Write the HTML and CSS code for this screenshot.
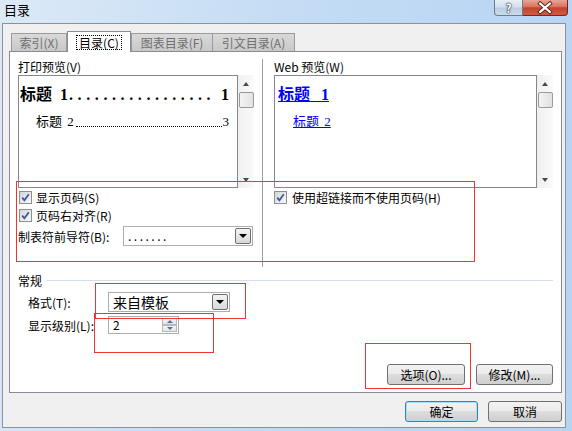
FILE: index.html
```html
<!DOCTYPE html>
<html lang="zh-CN">
  <head>
    <meta charset="UTF-8" />
    <title>目录</title>
    <link rel="stylesheet" href="styles.css">
  </head>
  <body>
    <div class="window">
      <div class="titlebar">
        <span class="title">目录</span>
        <div class="caption-btns">
          <span class="cap-help">?</span>
          <span class="cap-close">
            <svg width="45" height="16" viewBox="0 0 45 16">
              <path d="M17.5 3.5 L27.5 12 M27.5 3.5 L17.5 12" stroke="#5a1a10" stroke-width="4" stroke-linecap="square" />
              <path d="M17.5 3.5 L27.5 12 M27.5 3.5 L17.5 12" stroke="#fff" stroke-width="2.2" stroke-linecap="square" />
            </svg>
          </span>
        </div>
      </div>

      <div class="client">
        <div class="tabs">
          <span class="tab tab-index">索引(X)</span>
          <span class="tab tab-active"><span class="focus">目录(C)</span></span>
          <span class="tab tab-figures">图表目录(F)</span>
          <span class="tab tab-cite">引文目录(A)</span>
        </div>

        <div class="panel">
          <div class="previews">
            <div class="col col-left">
              <div class="label">打印预览(V)</div>
              <div class="preview">
                <div class="preview-box">
                  <div class="toc-1">
                    <span>标题 1</span>
                    <span class="leader-big">.................</span>
                    <span>1</span>
                  </div>
                  <div class="toc-2">
                    <span>标题 2</span>
                    <span class="leader-small"></span>
                    <span>3</span>
                  </div>
                </div>
                <div class="vscroll">
                  <span class="arrow arrow-up"></span>
                  <span class="thumb"></span>
                  <span class="track"></span>
                  <span class="arrow arrow-down"></span>
                </div>
              </div>
              <div class="check-row">
                <span class="check"><svg width="9" height="9" viewBox="0 0 9 9"><path d="M1.2 4.6 L3.4 7.2 L7.8 1.2" fill="none" stroke="#3f5a98" stroke-width="1.8" /></svg></span>
                <span>显示页码(S)</span>
              </div>
              <div class="check-row">
                <span class="check"><svg width="9" height="9" viewBox="0 0 9 9"><path d="M1.2 4.6 L3.4 7.2 L7.8 1.2" fill="none" stroke="#3f5a98" stroke-width="1.8" /></svg></span>
                <span>页码右对齐(R)</span>
              </div>
              <div class="field-row">
                <span class="field-label">制表符前导符(B):</span>
                <div class="combo combo-leader">
                  <span class="combo-text dots">.......</span>
                  <span class="combo-btn"></span>
                </div>
              </div>
            </div>

            <div class="divider"></div>

            <div class="col col-right">
              <div class="label">Web 预览(W)</div>
              <div class="preview">
                <div class="preview-box">
                  <div class="web-1">标题 1</div>
                  <div class="web-2">标题 2</div>
                </div>
                <div class="vscroll">
                  <span class="arrow arrow-up"></span>
                  <span class="thumb"></span>
                  <span class="track"></span>
                  <span class="arrow arrow-down"></span>
                </div>
              </div>
              <div class="check-row">
                <span class="check"><svg width="9" height="9" viewBox="0 0 9 9"><path d="M1.2 4.6 L3.4 7.2 L7.8 1.2" fill="none" stroke="#3f5a98" stroke-width="1.8" /></svg></span>
                <span>使用超链接而不使用页码(H)</span>
              </div>
            </div>
          </div>

          <div class="group-head">
            <span>常规</span>
            <span class="group-line"></span>
          </div>
          <div class="form-row">
            <span class="form-label">格式(T):</span>
            <div class="combo combo-format">
              <span class="combo-text">来自模板</span>
              <span class="combo-btn"></span>
            </div>
          </div>
          <div class="form-row form-row-spin">
            <span class="form-label">显示级别(L):</span>
            <div class="spin">
              <span class="spin-text">2</span>
              <span class="spin-btns">
                <span class="spin-up"></span>
                <span class="spin-down"></span>
              </span>
            </div>
          </div>

          <div class="panel-actions">
            <button class="btn btn-options">选项(O)...</button>
            <button class="btn btn-modify">修改(M)...</button>
          </div>
        </div>

        <div class="dialog-actions">
          <button class="btn btn-ok">确定</button>
          <button class="btn btn-cancel">取消</button>
        </div>
      </div>
    </div>

    <!-- red annotation boxes drawn over the dialog -->
    <div class="mark mark-checks"></div>
    <div class="mark mark-format"></div>
    <div class="mark mark-level"></div>
    <div class="mark mark-options"></div>
  </body>
</html>
```

FILE: styles.css
```css
* {
  margin: 0;
  padding: 0;
  box-sizing: border-box;
}
body {
  position: relative;
  width: 572px;
  height: 431px;
  overflow: hidden;
  font-family: "Noto Sans CJK SC", "Liberation Sans", sans-serif;
  font-size: 12px;
  color: #000;
  background: linear-gradient(100deg, #dce9f7 0%, #c4dcf4 45%, #b6d3f3 100%);
}
.window {
  display: flex;
  flex-direction: column;
  height: 431px;
}
.titlebar {
  height: 23px;
  display: flex;
  align-items: flex-start;
}
.title {
  padding: 3px 0 0 4px;
  line-height: 14px;
  font-size: 13px;
}
.caption-btns {
  margin-left: auto;
  margin-right: 4px;
  display: flex;
}
.cap-help {
  width: 29px;
  height: 16px;
  border: 1px solid #6f7c8e;
  border-top: none;
  border-radius: 0 0 0 4px;
  background: linear-gradient(#e8eff8 0%, #d3dfec 48%, #bccbdf 52%, #cbdbee 100%);
  color: #fff;
  font-weight: bold;
  font-size: 12px;
  line-height: 15px;
  text-align: center;
  text-shadow: 0 0 1px #2d3a4c, 0 0 1px #2d3a4c, 0 0 2px #2d3a4c;
}
.cap-close {
  width: 45px;
  height: 16px;
  border: 1px solid #6b2a22;
  border-left: none;
  border-top: none;
  border-radius: 0 0 4px 0;
  background: linear-gradient(#e8a597 0%, #d9735f 45%, #c4422b 52%, #d35a3f 100%);
  display: flex;
}
.client {
  flex: 1;
  margin: 0 6px 3px 2px;
  border: 1px solid #8b929c;
  background: #f0f0f0;
  padding: 7px 0 0 6px;
  display: flex;
  flex-direction: column;
}

/* tabs */
.tabs {
  display: flex;
  align-items: flex-end;
  height: 20px;
  margin-left: 2px;
}
.tab {
  height: 18px;
  border: 1px solid #9b9b9b;
  border-bottom: none;
  background: linear-gradient(#d9d9d9, #c8c8c8);
  color: #6f6f6f;
  display: flex;
  align-items: center;
  justify-content: center;
  line-height: 14px;
}
.tab-index {
  width: 56px;
}
.tab-active {
  position: relative;
  z-index: 1;
  width: 64px;
  height: 21px;
  margin-bottom: -1px;
  border-color: #898c95;
  background: #fff;
  color: #000;
  align-items: flex-start;
  padding-top: 3px;
}
.focus {
  border: 1px dotted #000;
  padding: 0 2px;
  line-height: 13px;
}
.tab-figures {
  width: 82px;
}
.tab-cite {
  width: 82px;
  border-left: none;
}

/* panel */
.panel {
  width: 553px;
  height: 342px;
  border: 1px solid #898c95;
  background: #fff;
  padding: 7px 8px 7px 8px;
  display: flex;
  flex-direction: column;
}
.previews {
  display: flex;
  height: 208px;
}
.col-left {
  width: 236px;
}
.col-right {
  width: 279px;
}
.divider {
  width: 1px;
  background: #a0a0a0;
  margin: 0 11px 0 8px;
}
.label {
  height: 16px;
  line-height: 16px;
}
.preview {
  display: flex;
  height: 113px;
}
.preview-box {
  flex: 1;
  min-width: 0;
  overflow: hidden;
  border: 1px solid #828790;
  background: #fff;
  padding: 9px 8px 0 1px;
}
.toc-1 {
  display: flex;
  align-items: baseline;
  height: 20px;
  line-height: 20px;
  font-family: "Liberation Serif", "Noto Sans CJK SC", serif;
  font-size: 16px;
  font-weight: bold;
  word-spacing: 4px;
}
.toc-1 span,
.toc-2 span {
  flex: none;
}
.toc-1 .leader-big {
  flex: 1;
  min-width: 0;
  overflow: hidden;
  white-space: nowrap;
  letter-spacing: 4.6px;
  margin-left: 1px;
}
.toc-2 {
  display: flex;
  align-items: baseline;
  height: 20px;
  line-height: 20px;
  margin-top: 7px;
  padding-left: 16px;
  font-family: "Liberation Serif", "Noto Sans CJK SC", serif;
  font-size: 13px;
  word-spacing: 2px;
}
.toc-2 .leader-small {
  flex: 1;
  align-self: flex-end;
  height: 1px;
  margin: 0 1px 5px 2px;
  border-bottom: 1px dotted #000;
}
.web-1 {
  height: 20px;
  line-height: 20px;
  padding-left: 2px;
  color: #0000ff;
  text-decoration: underline;
  font-family: "Liberation Serif", "Noto Sans CJK SC", serif;
  font-size: 16px;
  font-weight: bold;
  word-spacing: 7px;
}
.web-2 {
  height: 20px;
  line-height: 20px;
  margin-top: 7px;
  padding-left: 17px;
  color: #0000ff;
  text-decoration: underline;
  font-family: "Liberation Serif", "Noto Sans CJK SC", serif;
  font-size: 13px;
  word-spacing: 2px;
}
.vscroll {
  width: 16px;
  flex: none;
  display: flex;
  flex-direction: column;
  align-items: center;
  background: linear-gradient(to right, #efefef, #fbfbfb);
}
.arrow {
  height: 17px;
  width: 16px;
  display: flex;
  align-items: center;
  justify-content: center;
}
.arrow::after {
  content: "";
  border-left: 3.5px solid transparent;
  border-right: 3.5px solid transparent;
}
.arrow-up::after {
  border-bottom: 4px solid #4a4a4a;
}
.arrow-down::after {
  border-top: 4px solid #4a4a4a;
}
.thumb {
  width: 15px;
  height: 16px;
  border: 1px solid #9a9a9a;
  border-radius: 2px;
  background: linear-gradient(to right, #f3f3f3, #e2e2e2);
}
.track {
  flex: 1;
}

/* checkboxes and combos */
.check-row {
  display: flex;
  align-items: center;
  height: 18px;
  gap: 4px;
}
.col-left .check {
  margin-left: 1px;
}
.col-right .check-row {
  gap: 5px;
}
.check {
  width: 13px;
  height: 13px;
  border: 1px solid #8e8f8f;
  background: linear-gradient(135deg, #d2d5da, #f8f9fa);
  display: flex;
  align-items: center;
  justify-content: center;
}
.field-row {
  display: flex;
  align-items: center;
  height: 20px;
  margin-top: 2px;
}
.field-label {
  width: 105px;
}
.combo {
  display: flex;
  height: 20px;
  padding: 1px;
  border: 1px solid #abadb3;
  background: #fff;
}
.combo-leader {
  width: 130px;
}
.combo-format {
  width: 122px;
}
.combo-text {
  flex: 1;
  padding-left: 3px;
  line-height: 16px;
  white-space: nowrap;
}
.combo-format .combo-text {
  font-size: 14px;
}
.dots {
  letter-spacing: 2.5px;
}
.combo-btn {
  width: 16px;
  border: 1px solid #6f6f6f;
  border-radius: 2px;
  background: linear-gradient(#f4f4f4, #d8d8d8);
  display: flex;
  align-items: center;
  justify-content: center;
}
.combo-btn::after {
  content: "";
  border-left: 4px solid transparent;
  border-right: 4px solid transparent;
  border-top: 4px solid #000;
}

/* general section */
.group-head {
  display: flex;
  align-items: center;
  height: 16px;
  margin-top: 5px;
}
.group-line {
  flex: 1;
  height: 1px;
  margin-left: 5px;
  background: #d5dfe5;
}
.form-row {
  display: flex;
  align-items: center;
  height: 20px;
  margin-top: 4px;
  padding-left: 10px;
}
.form-row-spin {
  height: 18px;
}
.form-label {
  width: 80px;
}
.spin {
  display: flex;
  width: 71px;
  height: 18px;
  padding: 1px;
  border: 1px solid #abadb3;
  background: #fff;
}
.spin-text {
  flex: 1;
  padding-left: 3px;
  line-height: 14px;
}
.spin-btns {
  width: 15px;
  display: flex;
  flex-direction: column;
}
.spin-up,
.spin-down {
  flex: 1;
  border: 1px solid #b8b8b8;
  background: linear-gradient(#f6f6f6, #e4e4e4);
  display: flex;
  align-items: center;
  justify-content: center;
}
.spin-up::after,
.spin-down::after {
  content: "";
  border-left: 3px solid transparent;
  border-right: 3px solid transparent;
}
.spin-up::after {
  border-bottom: 3px solid #4d6fb3;
}
.spin-down::after {
  border-top: 3px solid #4d6fb3;
}

/* buttons */
.btn {
  height: 21px;
  border: 1px solid #707070;
  border-radius: 3px;
  background: linear-gradient(#f2f2f2 0%, #ebebeb 45%, #dddddd 50%, #cfcfcf 100%);
  font-family: inherit;
  font-size: 12px;
  color: #000;
  line-height: 14px;
}
.panel-actions {
  margin-top: auto;
  display: flex;
  justify-content: flex-end;
  gap: 11px;
}
.btn-options {
  width: 78px;
}
.btn-modify {
  width: 77px;
}
.dialog-actions {
  width: 553px;
  margin-top: 8px;
  display: flex;
  justify-content: flex-end;
  gap: 10px;
}
.btn-ok {
  width: 73px;
  border-color: #3c7fb1;
  box-shadow: inset 0 0 0 1px #a8e0f5;
}
.btn-cancel {
  width: 74px;
}

/* annotations */
.mark {
  position: absolute;
  border: 1px solid #f03434;
  pointer-events: none;
}
.mark-checks {
  left: 16px;
  top: 181px;
  width: 459px;
  height: 81px;
}
.mark-format {
  left: 95px;
  top: 283px;
  width: 151px;
  height: 36px;
}
.mark-level {
  left: 94px;
  top: 313px;
  width: 120px;
  height: 40px;
}
.mark-options {
  left: 365px;
  top: 343px;
  width: 106px;
  height: 46px;
}
```
